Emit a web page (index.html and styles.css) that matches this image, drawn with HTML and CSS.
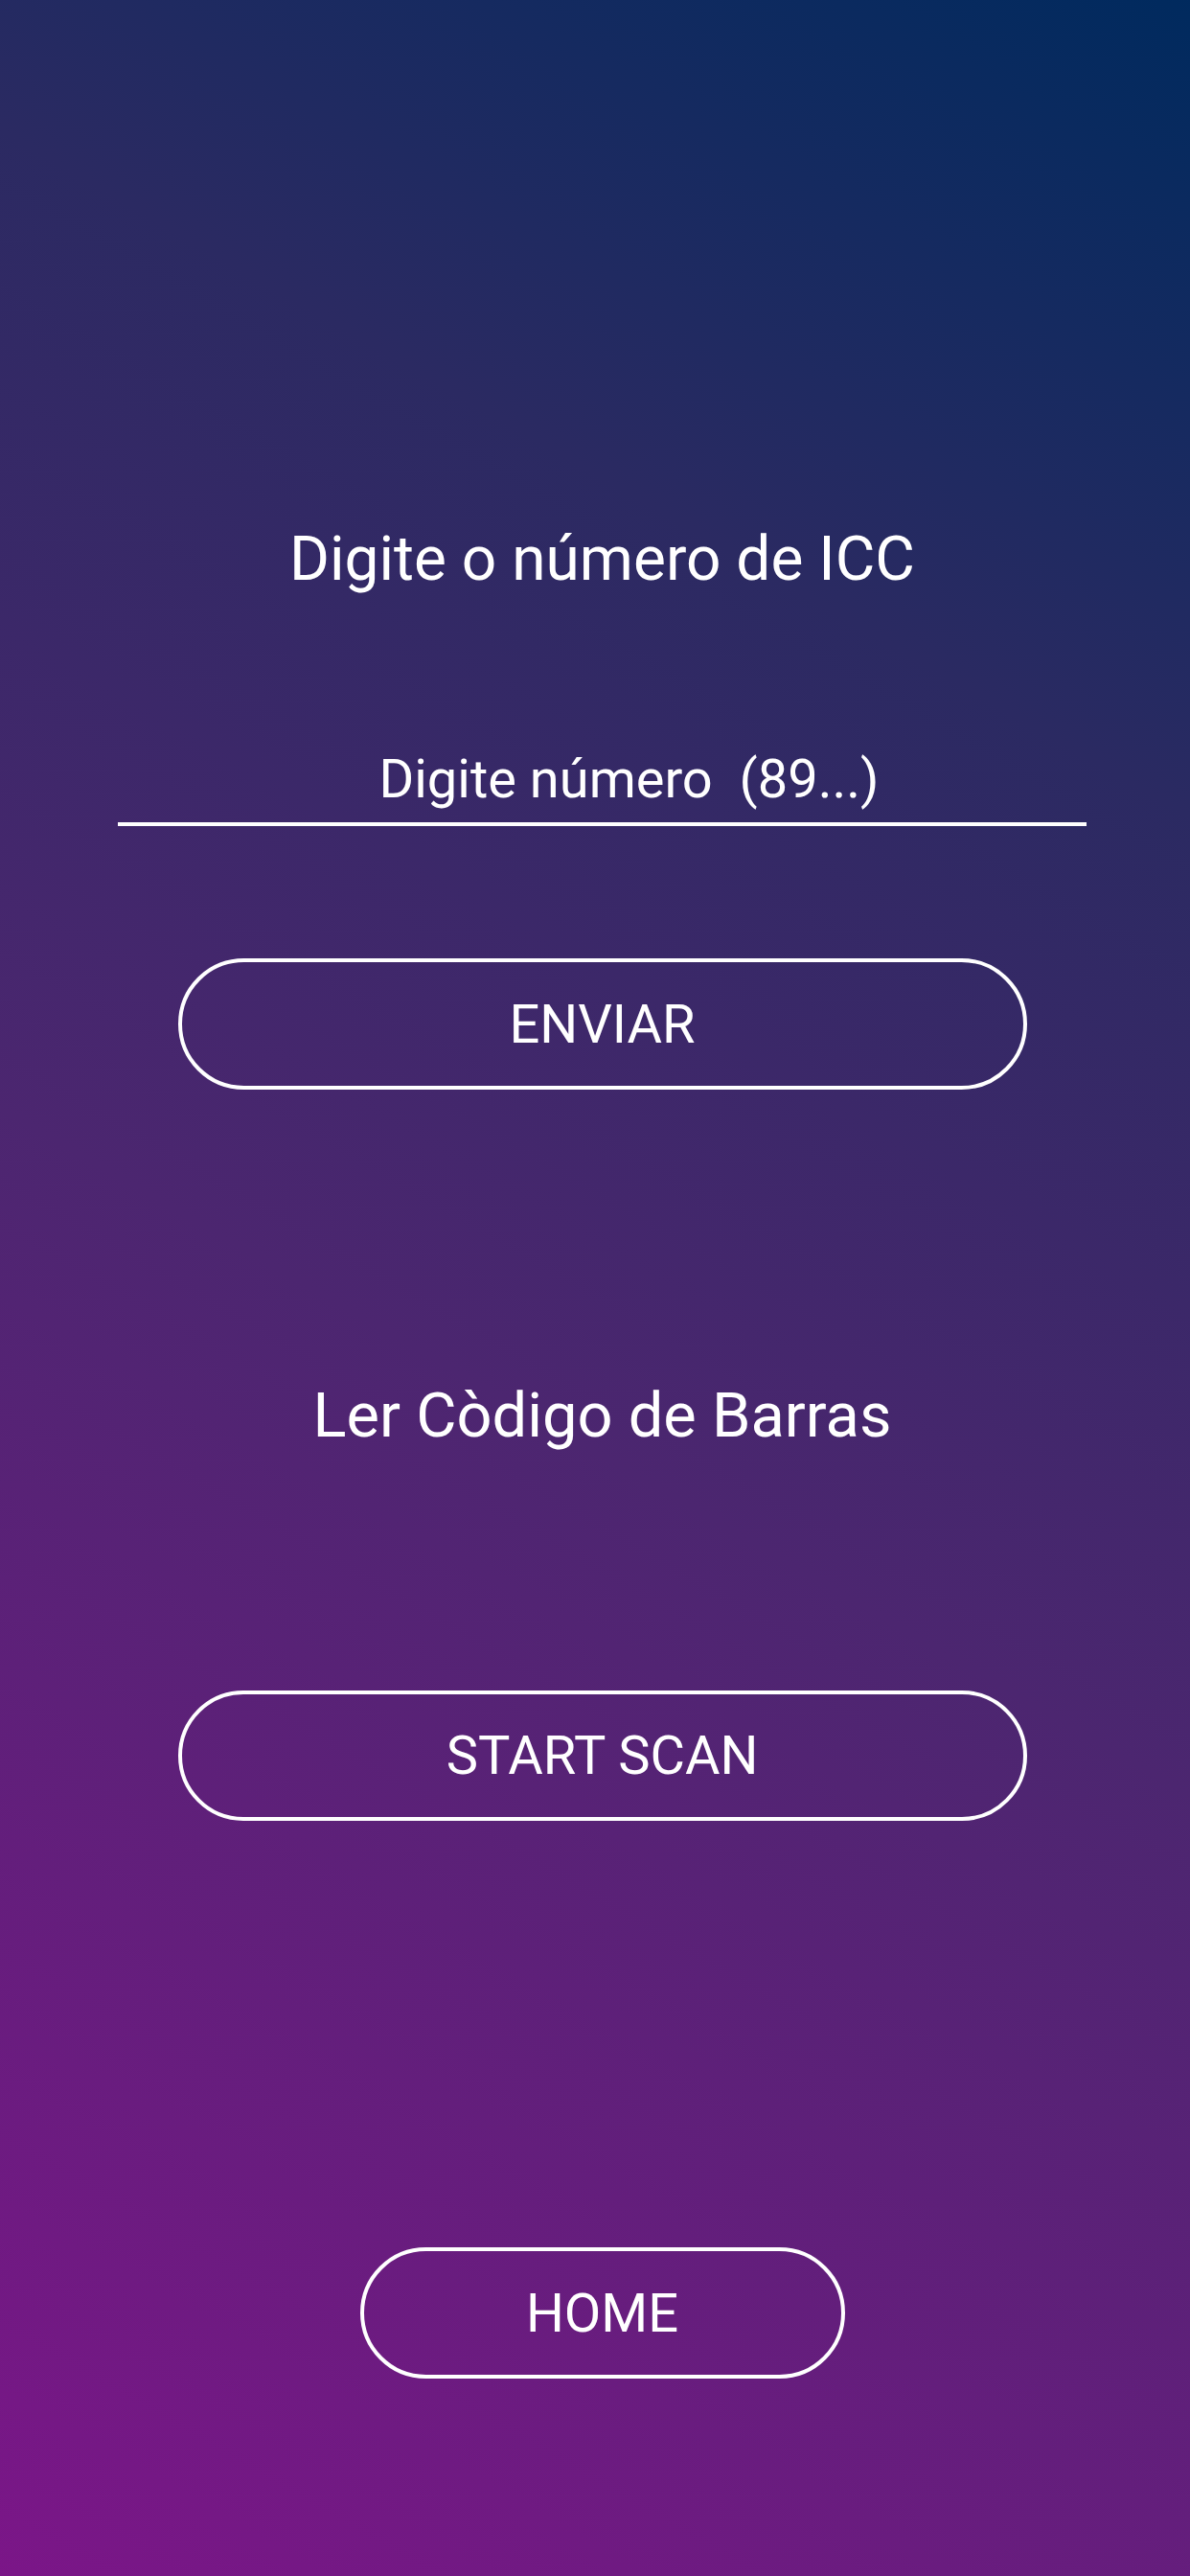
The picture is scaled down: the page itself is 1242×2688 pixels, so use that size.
FILE: index.html
```html
<!DOCTYPE html>
<html lang="pt">
<head>
  <meta charset="UTF-8">
  <meta name="viewport" content="width=device-width, initial-scale=1.0">
  <title>Ler ICC</title>
  <link rel="stylesheet" href="styles.css">
</head>
<body>
  <main class="screen">
    <h1 class="label">Digite o número de ICC</h1>
    <input class="icc-input" type="text" placeholder="Digite número &nbsp;(89...)">
    <button class="btn btn-send">Enviar</button>

    <h2 class="label label-scan">Ler Còdigo de Barras</h2>
    <button class="btn btn-scan">Start Scan</button>

    <button class="btn btn-home">Home</button>
  </main>
</body>
</html>
```

FILE: styles.css
```css
/* General styling */
html, body {
  height: 100%;
}

body {
  margin: 0;
  font-family: Roboto, "Noto Sans", Arial, sans-serif;
  color: #fff;
  background: linear-gradient(30deg, #7b1688 0%, #4c2670 45%, #2b2a62 75%, #002a5e 100%);
}

/* Main column */
.screen {
  display: flex;
  flex-direction: column;
  align-items: center;
  padding: 546px 0 0 15px;
}

/* Headings */
.label {
  margin: 0;
  font-size: 64px;
  line-height: 76px;
  font-weight: 400;
  text-align: center;
}

.label-scan {
  margin-top: 302px;
  font-size: 65px;
}

/* ICC number field */
.icc-input {
  width: 955px;
  height: 66px;
  margin-top: 158px;
  padding: 0 0 12px 56px; /* hint sits a bit right of centre */
  border: none;
  border-bottom: 4px solid #fff;
  background: transparent;
  color: #fff;
  font-family: inherit;
  font-size: 56px;
  text-align: center;
  outline: none;
}

.icc-input::placeholder {
  color: #fff;
  opacity: 1;
}

/* Outline buttons */
.btn {
  width: 886px;
  height: 137px;
  border: 4px solid #fff;
  border-radius: 70px;
  background: transparent;
  color: #fff;
  font-family: inherit;
  font-size: 56px;
  text-transform: uppercase;
  cursor: pointer;
}

.btn-send {
  margin-top: 138px;
}

.btn-scan {
  margin-top: 249px;
  height: 136px;
}

.btn-home {
  width: 506px;
  margin-top: 445px;
}
```
